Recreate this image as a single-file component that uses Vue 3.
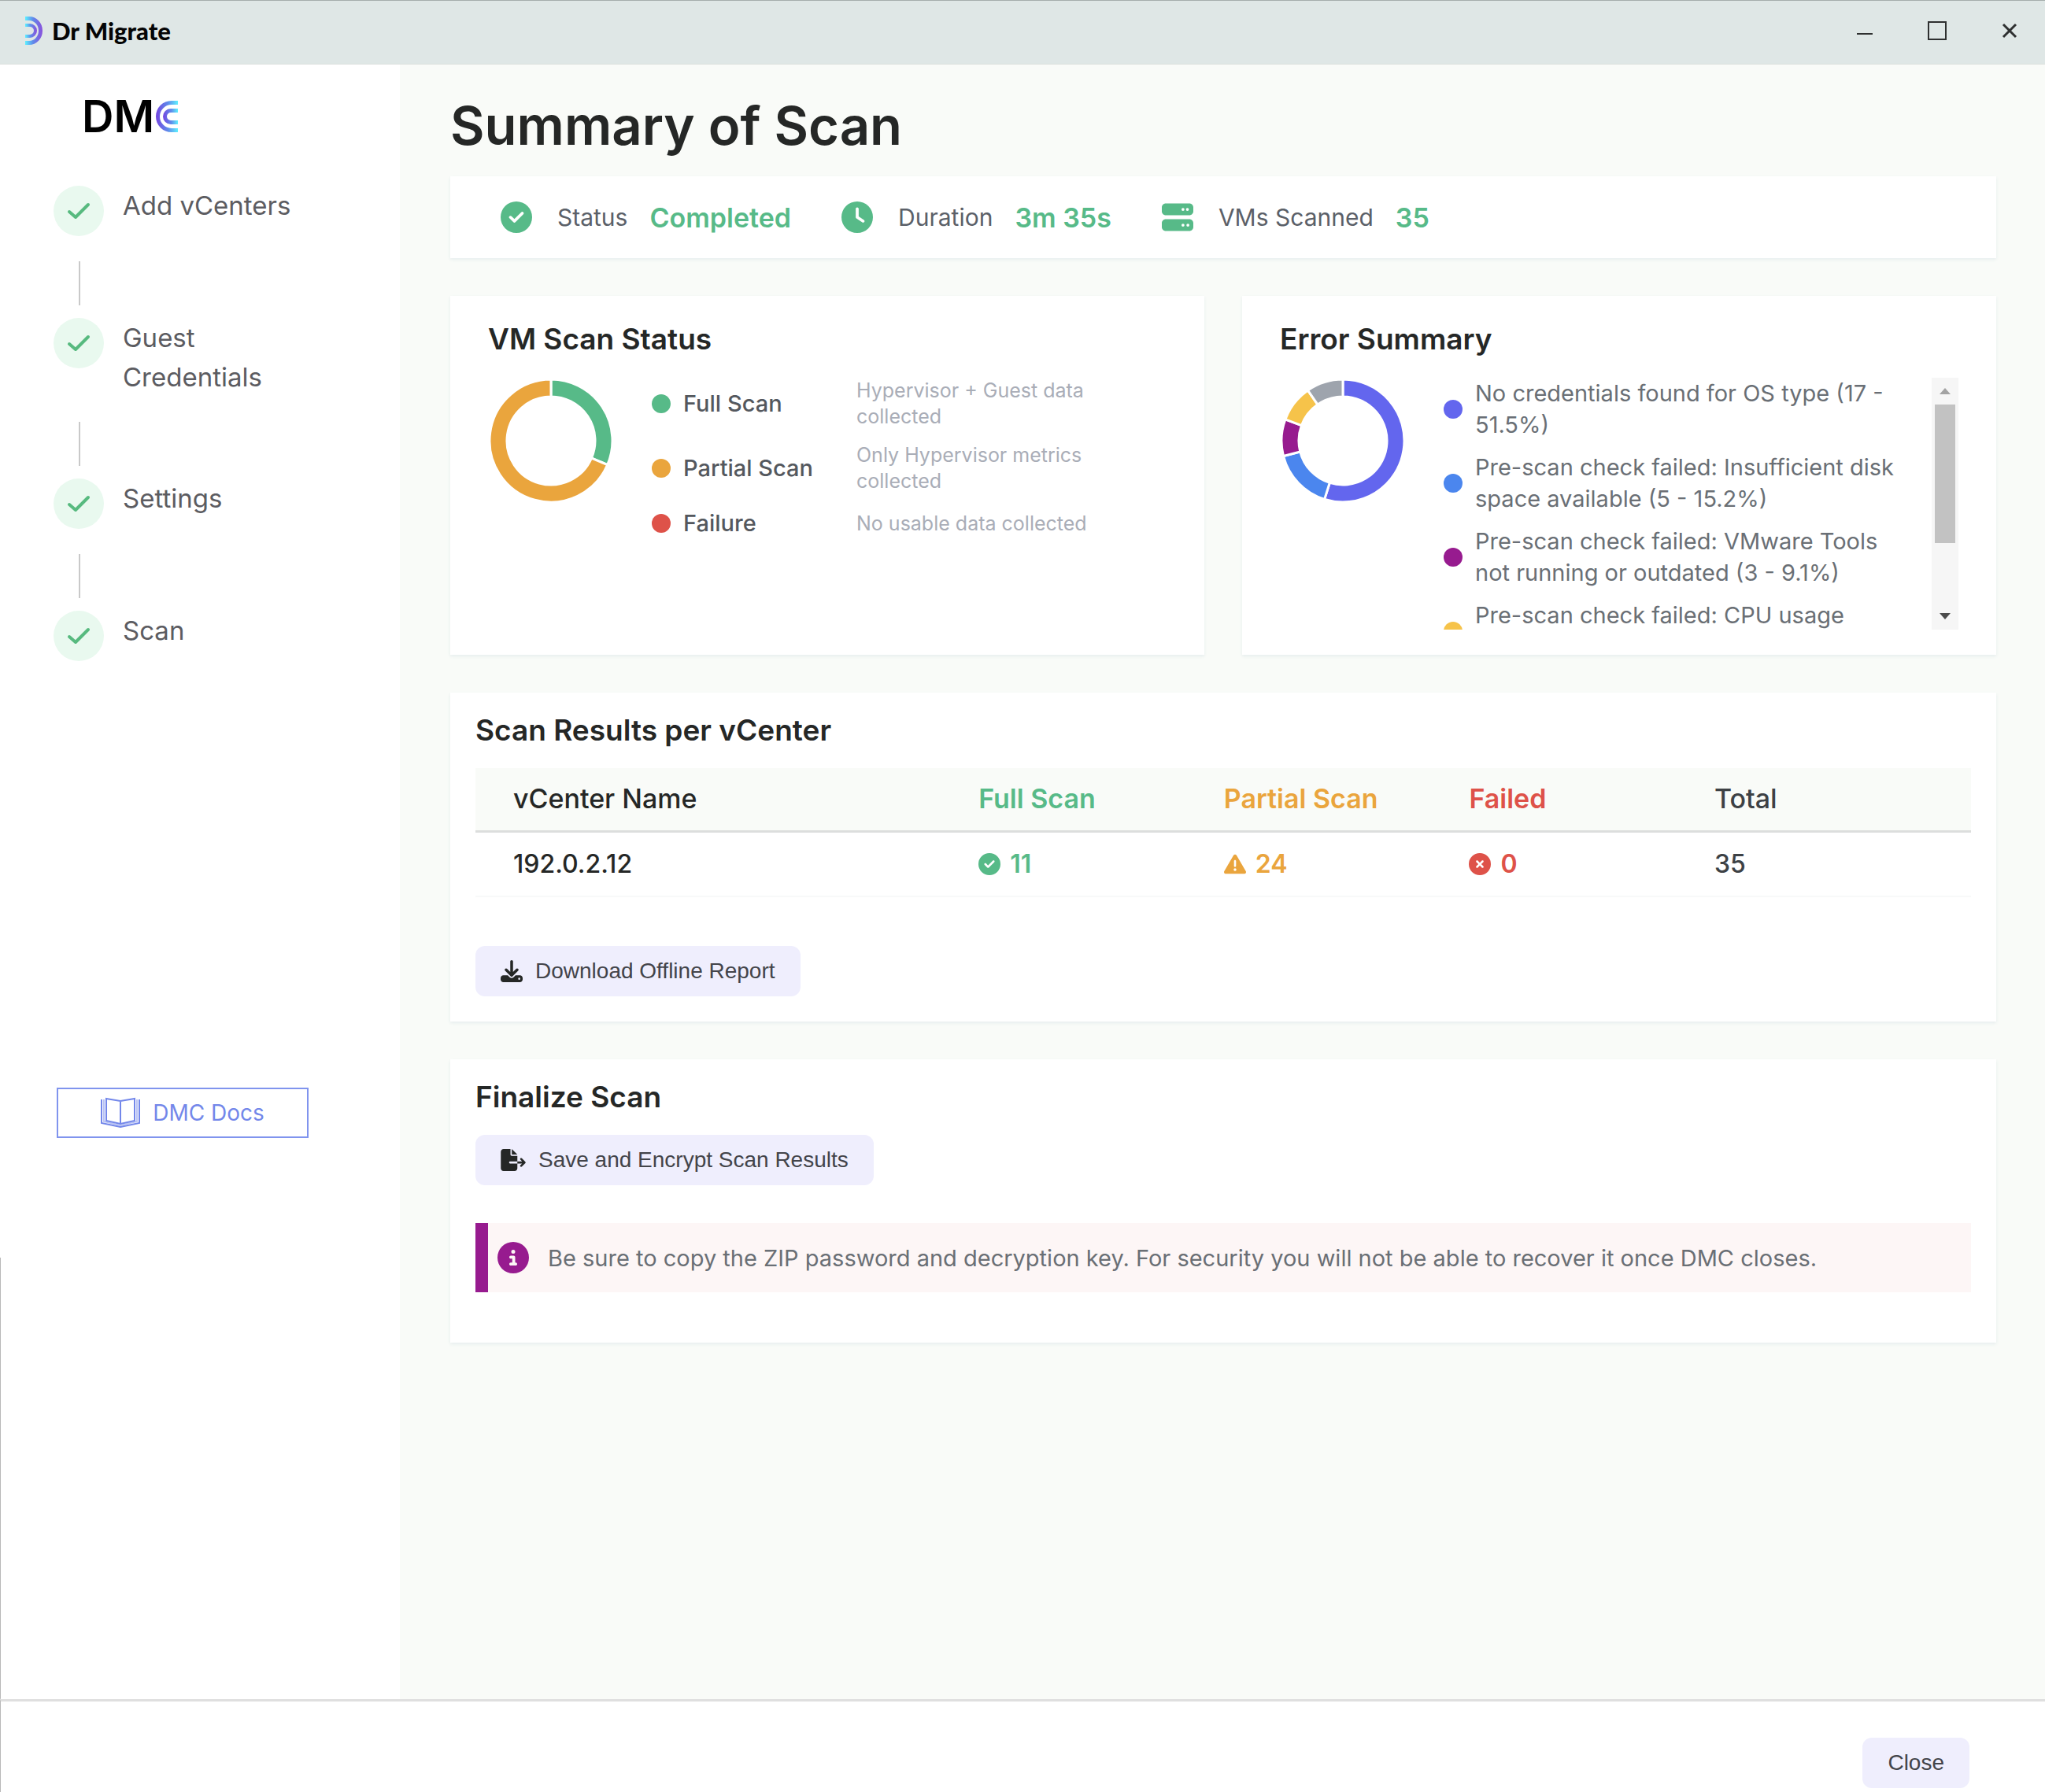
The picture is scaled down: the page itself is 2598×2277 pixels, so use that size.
<script setup>
const steps = ['Add vCenters', 'Guest Credentials', 'Settings', 'Scan']

const icons = {
  check: 'M256 512A256 256 0 1 0 256 0a256 256 0 1 0 0 512zM369 209L241 337c-9.4 9.4-24.6 9.4-33.9 0l-64-64c-9.4-9.4-9.4-24.6 0-33.9s24.6-9.4 33.9 0l47 47L335 175c9.4-9.4 24.6-9.4 33.9 0s9.4 24.6 0 33.9z',
  clock: 'M256 0a256 256 0 1 1 0 512A256 256 0 1 1 256 0zM232 120V256c0 8 4 15.5 10.7 20l96 64c11 7.4 25.9 4.4 33.3-6.7s4.4-25.9-6.7-33.3L280 243.2V120c0-13.3-10.7-24-24-24s-24 10.7-24 24z',
  server: 'M64 32C28.7 32 0 60.7 0 96v64c0 35.3 28.7 64 64 64H448c35.3 0 64-28.7 64-64V96c0-35.3-28.7-64-64-64H64zm280 72a24 24 0 1 1 0 48 24 24 0 1 1 0-48zm48 24a24 24 0 1 1 48 0 24 24 0 1 1 -48 0zM64 288c-35.3 0-64 28.7-64 64v64c0 35.3 28.7 64 64 64H448c35.3 0 64-28.7 64-64V352c0-35.3-28.7-64-64-64H64zm280 72a24 24 0 1 1 0 48 24 24 0 1 1 0-48zm56 24a24 24 0 1 1 48 0 24 24 0 1 1 -48 0z',
  warning: 'M256 32c14.2 0 27.3 7.5 34.5 19.8l216 368c7.3 12.4 7.3 27.7 .2 40.1S486.3 480 472 480H40c-14.3 0-27.6-7.7-34.7-20.1s-7-27.8 .2-40.1l216-368C228.7 39.5 241.8 32 256 32zm0 128c-13.3 0-24 10.7-24 24V296c0 13.3 10.7 24 24 24s24-10.7 24-24V184c0-13.3-10.7-24-24-24zm32 224a32 32 0 1 0 -64 0 32 32 0 1 0 64 0z',
  cross: 'M256 512A256 256 0 1 0 256 0a256 256 0 1 0 0 512zM175 175c9.4-9.4 24.6-9.4 33.9 0l47 47 47-47c9.4-9.4 24.6-9.4 33.9 0s9.4 24.6 0 33.9l-47 47 47 47c9.4 9.4 9.4 24.6 0 33.9s-24.6 9.4-33.9 0l-47-47-47 47c-9.4 9.4-24.6 9.4-33.9 0s-9.4-24.6 0-33.9l47-47-47-47c-9.4-9.4-9.4-24.6 0-33.9z',
  info: 'M256 512A256 256 0 1 0 256 0a256 256 0 1 0 0 512zM216 336h24V272H216c-13.3 0-24-10.7-24-24s10.7-24 24-24h48c13.3 0 24 10.7 24 24v88h8c13.3 0 24 10.7 24 24s-10.7 24-24 24H216c-13.3 0-24-10.7-24-24s10.7-24 24-24zm40-208a32 32 0 1 1 0 64 32 32 0 1 1 0-64z',
  download: 'M288 32c0-17.7-14.3-32-32-32s-32 14.3-32 32V274.7l-73.4-73.4c-12.5-12.5-32.8-12.5-45.3 0s-12.5 32.8 0 45.3l128 128c12.5 12.5 32.8 12.5 45.3 0l128-128c12.5-12.5 12.5-32.8 0-45.3s-32.8-12.5-45.3 0L288 274.7V32zM64 352c-35.3 0-64 28.7-64 64v32c0 35.3 28.7 64 64 64H448c35.3 0 64-28.7 64-64V416c0-35.3-28.7-64-64-64H346.5l-45.3 45.3c-25 25-65.5 25-90.5 0L165.5 352H64zm368 56a24 24 0 1 1 0 48 24 24 0 1 1 0-48z',
  fileExport: 'M0 64C0 28.7 28.7 0 64 0H224V128c0 17.7 14.3 32 32 32H384V288H216c-13.3 0-24 10.7-24 24s10.7 24 24 24H384V448c0 35.3-28.7 64-64 64H64c-35.3 0-64-28.7-64-64V64zM384 336V288H494.1l-39-39c-9.4-9.4-9.4-24.6 0-33.9s24.6-9.4 33.9 0l80 80c9.4 9.4 9.4 24.6 0 33.9l-80 80c-9.4 9.4-24.6 9.4-33.9 0s-9.4-24.6 0-33.9l39-39H384zm0-208H256V0L384 128z',
}

const stats = [
  { icon: icons.check, label: 'Status', value: 'Completed' },
  { icon: icons.clock, label: 'Duration', value: '3m 35s' },
  { icon: icons.server, label: 'VMs Scanned', value: '35' },
]

const scanStatus = [
  { label: 'Full Scan', note: 'Hypervisor + Guest data collected', color: '#57ba88', count: 11 },
  { label: 'Partial Scan', note: 'Only Hypervisor metrics collected', color: '#eaa53d', count: 24 },
  { label: 'Failure', note: 'No usable data collected', color: '#de5249', count: 0 },
]

const errors = [
  { label: 'No credentials found for OS type (17 - 51.5%)', color: '#6366ee', count: 17 },
  { label: 'Pre-scan check failed: Insufficient disk space available (5 - 15.2%)', color: '#4b86ee', count: 5 },
  { label: 'Pre-scan check failed: VMware Tools not running or outdated (3 - 9.1%)', color: '#971b8f', count: 3 },
  { label: 'Pre-scan check failed: CPU usage', color: '#f6c34a', count: 3 },
  { label: '', color: '#9ea4ad', count: 3 },
]
const listedErrors = errors.filter((e) => e.label)

// Turns counts into ring segments, clockwise from twelve o'clock.
function ring(items) {
  const total = items.reduce((sum, item) => sum + item.count, 0)
  const outer = 78
  const inner = 56
  let turn = 0
  const point = (r, t) => {
    const a = t * 2 * Math.PI
    return `${(80 + r * Math.sin(a)).toFixed(2)} ${(80 - r * Math.cos(a)).toFixed(2)}`
  }
  return items.filter((item) => item.count).map((item) => {
    const from = turn
    turn += item.count / total
    const large = turn - from > 0.5 ? 1 : 0
    return {
      color: item.color,
      d: `M${point(outer, from)}A${outer} ${outer} 0 ${large} 1 ${point(outer, turn)}L${point(inner, turn)}A${inner} ${inner} 0 ${large} 0 ${point(inner, from)}Z`,
    }
  })
}

const charts = { status: ring(scanStatus), errors: ring(errors) }
</script>

<template>
  <div class="app">
    <header class="titlebar">
      <div class="brand">
        <svg class="brand-mark" viewBox="0 0 22 36" aria-hidden="true">
          <defs>
            <linearGradient id="markBrand" x1="0" x2="1" y1="0" y2="0">
              <stop offset="0" stop-color="#5ff0ff" />
              <stop offset="0.45" stop-color="#5f8bea" />
              <stop offset="1" stop-color="#8a50dc" />
            </linearGradient>
          </defs>
          <path fill="url(#markBrand)" d="M0 0H5A17 18 0 0 1 5 36H0V31H5A12 13 0 0 0 5 5H0Z" />
          <path fill="url(#markBrand)" d="M0 9H6A9 9 0 0 1 6 27H0V23H6A5 5 0 0 0 6 13H0Z" />
        </svg>
        <span class="brand-name">Dr Migrate</span>
      </div>
      <div class="window-controls">
        <button type="button" aria-label="Minimize"><svg viewBox="0 0 24 24"><path d="M2 16H22" /></svg></button>
        <button type="button" aria-label="Maximize"><svg viewBox="0 0 24 24"><path d="M1 1H23V23H1Z" /></svg></button>
        <button type="button" aria-label="Close window"><svg viewBox="0 0 24 24"><path stroke-width="3" d="M4 4L20 20M20 4L4 20" /></svg></button>
      </div>
    </header>

    <div class="body">
      <aside class="sidebar">
        <div class="logo">
          <span>DM</span>
          <svg class="logo-mark" viewBox="0 0 28 40" aria-hidden="true">
            <defs>
              <linearGradient id="markLogo" x1="0" x2="1" y1="0" y2="0">
                <stop offset="0" stop-color="#7444e0" />
                <stop offset="0.55" stop-color="#5f8bea" />
                <stop offset="1" stop-color="#5ff0ff" />
              </linearGradient>
            </defs>
            <path fill="url(#markLogo)" d="M28 0H20A20 20 0 0 0 20 40H28V35H20A15 15 0 0 1 20 5H28Z" />
            <path fill="url(#markLogo)" d="M28 10H19A10 10 0 0 0 19 30H28V25H19A5 5 0 0 1 19 15H28Z" />
          </svg>
        </div>

        <ol class="steps">
          <li v-for="step in steps" :key="step" class="step">
            <div class="step-body">
              <span class="step-badge">
                <svg viewBox="0 0 30 22" aria-hidden="true"><path d="M3 12L11 19L27 3" /></svg>
              </span>
              <span class="step-label">{{ step }}</span>
            </div>
          </li>
        </ol>

        <a class="docs" href="#">
          <svg viewBox="0 0 50 40" aria-hidden="true">
            <path d="M1 3V33L25 38L49 33V3" />
            <path d="M4 3V31L25 36L46 31V3" opacity="0.5" />
            <path d="M7 2L25 5L43 2V30L25 34L7 30ZM25 5V34" />
          </svg>
          <span>DMC Docs</span>
        </a>
      </aside>

      <main class="content">
        <h1>Summary of Scan</h1>

        <section class="card stats">
          <div v-for="stat in stats" :key="stat.label" class="stat">
            <svg viewBox="0 0 512 512" aria-hidden="true"><path :d="stat.icon" /></svg>
            <span class="stat-label">{{ stat.label }}</span>
            <span class="stat-value">{{ stat.value }}</span>
          </div>
        </section>

        <div class="pair">
          <section class="card chart-card">
            <h2>VM Scan Status</h2>
            <div class="chart-row">
              <svg class="donut" viewBox="0 0 160 160" role="img" aria-label="VM scan status chart">
                <path v-for="slice in charts.status" :key="slice.color" :d="slice.d" :fill="slice.color" />
              </svg>
              <ul class="scan-legend">
                <li v-for="item in scanStatus" :key="item.label">
                  <span class="dot" :style="{ background: item.color }"></span>
                  <span class="scan-label">{{ item.label }}</span>
                  <span class="scan-note">{{ item.note }}</span>
                </li>
              </ul>
            </div>
          </section>

          <section class="card chart-card">
            <h2>Error Summary</h2>
            <div class="chart-row">
              <svg class="donut" viewBox="0 0 160 160" role="img" aria-label="Error summary chart">
                <path v-for="slice in charts.errors" :key="slice.color" :d="slice.d" :fill="slice.color" />
              </svg>
              <div class="error-box">
                <ul class="error-list">
                  <li v-for="item in listedErrors" :key="item.label">
                    <span class="dot" :style="{ background: item.color }"></span>
                    <span class="error-label">{{ item.label }}</span>
                  </li>
                </ul>
                <div class="scrollbar" aria-hidden="true">
                  <svg class="arrow idle" viewBox="0 0 34 34"><path d="M10 21L17 13L24 21Z" /></svg>
                  <div class="thumb"></div>
                  <svg class="arrow" viewBox="0 0 34 34"><path d="M10 13L17 21L24 13Z" /></svg>
                </div>
              </div>
            </div>
          </section>
        </div>

        <section class="card panel">
          <h2>Scan Results per vCenter</h2>
          <table>
            <thead>
              <tr>
                <th scope="col">vCenter Name</th>
                <th scope="col" class="ok">Full Scan</th>
                <th scope="col" class="warn">Partial Scan</th>
                <th scope="col" class="bad">Failed</th>
                <th scope="col" class="total">Total</th>
              </tr>
            </thead>
            <tbody>
              <tr>
                <td>192.0.2.12</td>
                <td class="ok"><span class="count"><svg viewBox="0 0 512 512" aria-hidden="true"><path :d="icons.check" /></svg>11</span></td>
                <td class="warn"><span class="count"><svg viewBox="0 0 512 512" aria-hidden="true"><path :d="icons.warning" /></svg>24</span></td>
                <td class="bad"><span class="count"><svg viewBox="0 0 512 512" aria-hidden="true"><path :d="icons.cross" /></svg>0</span></td>
                <td class="total">35</td>
              </tr>
            </tbody>
          </table>
          <button type="button" class="btn">
            <svg class="icon-square" viewBox="0 0 512 512" aria-hidden="true"><path :d="icons.download" /></svg>
            Download Offline Report
          </button>
        </section>

        <section class="card panel finalize">
          <h2>Finalize Scan</h2>
          <button type="button" class="btn">
            <svg class="icon-wide" viewBox="0 0 576 512" aria-hidden="true"><path :d="icons.fileExport" /></svg>
            Save and Encrypt Scan Results
          </button>
          <p class="notice">
            <svg viewBox="0 0 512 512" aria-hidden="true"><path :d="icons.info" /></svg>
            <span>Be sure to copy the ZIP password and decryption key. For security you will not be able to recover it once DMC closes.</span>
          </p>
        </section>
      </main>
    </div>

    <footer class="footer">
      <button type="button" class="btn">Close</button>
    </footer>
  </div>
</template>

<style>
body {
  margin: 0;
}
</style>

<style scoped>
* {
  box-sizing: border-box;
}

.app {
  display: flex;
  flex-direction: column;
  min-height: 100vh;
  background: #fff;
  color: #252726;
  font-family: Inter, "Open Sans", sans-serif;
  font-size: 29px;
}

h1,
h2,
p,
ul,
ol {
  margin: 0;
  padding: 0;
  list-style: none;
}

button {
  border: 0;
  font-family: "Liberation Sans", Arial, sans-serif;
  cursor: pointer;
}

.titlebar {
  display: flex;
  align-items: center;
  justify-content: space-between;
  height: 82px;
  padding: 0 17px 4px 32px;
  border-top: 1px solid #a5adac;
  border-bottom: 1px solid #dcdfdd;
  background: #dfe7e6;
}

.brand {
  display: flex;
  align-items: center;
  gap: 12px;
}

.brand-mark {
  width: 22px;
  height: 36px;
}

.brand-name {
  color: #050505;
  font-family: Lato, sans-serif;
  font-size: 31px;
  font-weight: 900;
  line-height: 48px;
}

.window-controls {
  display: flex;
  gap: 36px;
}

.window-controls button {
  display: grid;
  place-items: center;
  width: 56px;
  height: 56px;
  padding: 0;
  background: none;
}

.window-controls svg {
  width: 24px;
  height: 24px;
  fill: none;
  stroke: #2e3030;
  stroke-width: 2;
}

.body {
  display: flex;
  flex: 1;
}

.sidebar {
  flex: 0 0 508px;
  padding: 32px 64px 0 68px;
  background: linear-gradient(#b8b8b8, #b8b8b8) left bottom / 1px 27% no-repeat;
}

.logo {
  display: flex;
  align-items: center;
  gap: 2px;
  height: 68px;
  padding-left: 36px;
  color: #000;
  font-size: 56px;
  font-weight: 600;
}

.logo-mark {
  width: 28px;
  height: 40px;
}

.steps {
  margin-top: 54px;
}

.step-body {
  display: flex;
  align-items: flex-start;
  gap: 24px;
  min-height: 64px;
}

.step:not(:last-child)::after {
  content: "";
  display: block;
  width: 2px;
  height: 56px;
  margin: 32px 0 16px 32px;
  background: #c9c9c9;
}

.step-badge {
  display: grid;
  flex: none;
  place-items: center;
  width: 64px;
  height: 64px;
  border-radius: 50%;
  background: #e9f9ef;
}

.step-badge svg {
  width: 30px;
  height: 22px;
  fill: none;
  stroke: #57ba7f;
  stroke-width: 4;
  stroke-linecap: round;
  stroke-linejoin: round;
}

.step-label {
  max-width: 240px;
  color: #5c5c61;
  font-size: 33px;
  line-height: 50px;
}

.docs {
  display: flex;
  align-items: center;
  justify-content: center;
  gap: 16px;
  width: 320px;
  height: 64px;
  margin: 542px 0 0 4px;
  border: 2px solid #8094ee;
  color: #7387ea;
  font-size: 28px;
  text-decoration: none;
}

.docs svg {
  width: 50px;
  height: 40px;
  fill: none;
  stroke: #7387ea;
  stroke-width: 2;
}

.content {
  flex: 1;
  min-width: 0;
  padding: 30px 62px 48px 64px;
  background: #f9fbf8;
}

h1 {
  margin-bottom: 16px;
  font-size: 67px;
  font-weight: 600;
  line-height: 96px;
}

h2 {
  font-size: 37px;
  font-weight: 600;
  line-height: 54px;
}

.card {
  background: #fff;
  box-shadow: 0 2px 4px #e6eeee;
}

.stats {
  display: flex;
  gap: 64px;
  padding: 32px 64px;
}

.stat {
  display: flex;
  align-items: center;
  height: 40px;
}

.stat svg {
  width: 40px;
  height: 40px;
  margin-right: 32px;
  fill: #57ba88;
}

.stat-label {
  margin-right: 28px;
  color: #5b6068;
  font-size: 30px;
}

.stat-value {
  color: #57ba88;
  font-size: 34px;
  font-weight: 600;
}

.pair {
  display: grid;
  grid-template-columns: 1fr 1fr;
  gap: 48px;
  margin: 48px 0;
}

.chart-card {
  padding: 28px 48px 32px;
}

.chart-row {
  display: flex;
  align-items: flex-start;
  gap: 48px;
  margin-top: 22px;
}

.donut {
  flex: none;
  width: 160px;
  height: 160px;
  stroke: #fff;
  stroke-width: 3;
}

.dot {
  flex: none;
  width: 24px;
  height: 24px;
  border-radius: 50%;
}

.scan-legend {
  display: grid;
  gap: 16px;
}

.scan-legend li {
  display: grid;
  grid-template-columns: 24px 204px 310px;
  column-gap: 16px;
  align-items: center;
}

.scan-label {
  color: #54585e;
  font-weight: 500;
  line-height: 42px;
}

.scan-note {
  color: #a9adb7;
  font-size: 25px;
  line-height: 33px;
}

.error-box {
  display: flex;
  flex: 1;
  justify-content: space-between;
  height: 320px;
}

.error-list {
  display: grid;
  flex: 0 1 580px;
  align-content: start;
  gap: 14px;
  overflow: hidden;
  color: #6a6f75;
  line-height: 40px;
}

.error-list li {
  display: flex;
  align-items: center;
  gap: 16px;
}

.error-label {
  min-height: 80px;
}

.scrollbar {
  display: flex;
  flex: none;
  flex-direction: column;
  align-items: center;
  width: 34px;
  background: #f6f6f6;
}

.arrow {
  width: 34px;
  height: 34px;
  fill: #4c4c4c;
}

.arrow:last-child {
  margin-top: auto;
}

.arrow.idle {
  fill: #a3a3a3;
}

.thumb {
  width: 26px;
  height: 176px;
  background: #c2c2c2;
}

.panel {
  padding: 21px 32px 32px;
}

table {
  width: 100%;
  margin: 21px 0 62px;
  border-collapse: collapse;
  table-layout: fixed;
  font-size: 32px;
  line-height: 48px;
}

th,
td {
  width: 16.4%;
  padding: 16px 16px;
  font-weight: 500;
  text-align: left;
}

th {
  padding-top: 15px;
  font-size: 34px;
}

th:first-child,
td:first-child {
  width: 32.8%;
  padding-left: 48px;
}

th:last-child,
td:last-child {
  width: 18%;
}

thead {
  border-bottom: 3px solid #dcdedd;
  background: #f9fbf8;
}

tbody tr {
  border-bottom: 2px solid #f8f9f9;
}

th.ok,
th.warn,
th.bad,
.count {
  font-weight: 600;
}

.ok {
  color: #57ba88;
}

.warn {
  color: #eaa53d;
}

.bad {
  color: #de5249;
}

.total {
  color: #3d4145;
}

.count {
  display: flex;
  align-items: center;
  gap: 12px;
}

.count svg {
  width: 28px;
  height: 28px;
  fill: currentColor;
}

.btn {
  display: flex;
  align-items: center;
  gap: 16px;
  height: 64px;
  padding: 0 32px;
  border-radius: 12px;
  background: #efeefd;
  color: #43444a;
  font-size: 28px;
}

.btn svg {
  height: 28px;
  fill: #252726;
}

.icon-square {
  width: 28px;
}

.icon-wide {
  width: 32px;
}

.finalize {
  margin-top: 48px;
  padding-bottom: 64px;
}

.finalize .btn {
  margin: 21px 0 48px;
}

.notice {
  display: flex;
  align-items: center;
  gap: 24px;
  min-height: 88px;
  padding: 0 12px;
  border-left: 16px solid #971b8f;
  background: #fdf6f6;
  color: #6a6f75;
}

.notice svg {
  flex: none;
  width: 40px;
  height: 40px;
  fill: #971b8f;
}

.footer {
  display: flex;
  justify-content: flex-end;
  padding: 46px 96px 5px;
  border-top: 3px solid #dfdfdf;
  border-left: 1px solid #b8b8b8;
}
</style>
